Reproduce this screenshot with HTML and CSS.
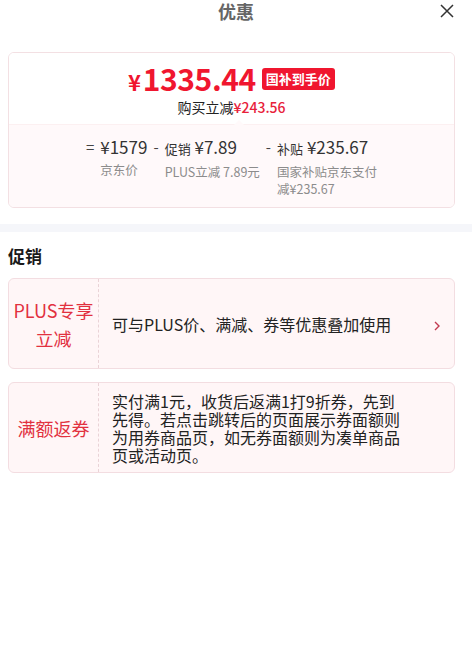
FILE: index.html
```html
<!DOCTYPE html>
<html lang="zh-CN">
<head>
    <meta charset="UTF-8">
    <meta name="viewport" content="width=device-width, initial-scale=1.0">
    <title>优惠</title>
    <link rel="stylesheet" href="styles.css">
</head>
<body>
    <div class="header">
        <span class="title">优惠</span>
        <span class="close">
            <svg width="14" height="14" viewBox="0 0 14 14"><path d="M1 1 L13 13 M13 1 L1 13" stroke="#333" stroke-width="1.5" fill="none"/></svg>
        </span>
    </div>

    <div class="summary">
        <div class="summary-top">
            <div class="price-row">
                <span class="price"><span class="yen">¥</span>1335.44</span>
                <span class="tag">国补到手价</span>
            </div>
            <div class="saving">购买立减<span class="red">¥243.56</span></div>
        </div>
        <div class="summary-bottom">
            <div class="calc">
                <div class="calc-col">
                    <span class="sign">=</span>
                    <div class="calc-body">
                        <div class="calc-num">¥1579</div>
                        <div class="calc-label">京东价</div>
                    </div>
                </div>
                <div class="calc-col">
                    <span class="sign">-</span>
                    <div class="calc-body">
                        <div class="calc-num"><span class="calc-name">促销</span> ¥7.89</div>
                        <div class="calc-label">PLUS立减 7.89元</div>
                    </div>
                </div>
                <div class="calc-col">
                    <span class="sign">-</span>
                    <div class="calc-body wide">
                        <div class="calc-num"><span class="calc-name">补贴</span> ¥235.67</div>
                        <div class="calc-label">国家补贴京东支付减¥235.67</div>
                    </div>
                </div>
            </div>
        </div>
    </div>

    <div class="divider"></div>

    <div class="section">
        <div class="section-title">促销</div>

        <div class="promo">
            <div class="promo-label">PLUS专享<br>立减</div>
            <div class="promo-desc">可与PLUS价、满减、券等优惠叠加使用</div>
            <div class="promo-side">
                <svg width="6" height="10" viewBox="0 0 6 10"><path d="M1 1 L5 5 L1 9" stroke="#c23a50" stroke-width="1.4" fill="none"/></svg>
            </div>
        </div>

        <div class="promo">
            <div class="promo-label">满额返券</div>
            <div class="promo-desc">实付满1元，收货后返满1打9折券，先到先得。若点击跳转后的页面展示券面额则为用券商品页，如无券面额则为凑单商品页或活动页。</div>
            <div class="promo-side"></div>
        </div>
    </div>
</body>
</html>
```

FILE: styles.css
```css
body {
    margin: 0;
    width: 472px;
    background-color: #fff;
    font-family: "Noto Sans CJK SC", "Liberation Sans", sans-serif;
    color: #333;
}
.header {
    position: relative;
    height: 22px;
    text-align: center;
}
.title {
    font-size: 18px;
    line-height: 22px;
    font-weight: bold;
    color: #666;
}
.close {
    position: absolute;
    right: 18px;
    top: 4px;
    width: 14px;
    height: 14px;
}
.close svg {
    display: block;
}
.summary {
    margin: 30px 0 0 8px;
    width: 445px;
    border: 1px solid #f3e0e3;
    border-radius: 6px;
    overflow: hidden;
}
.summary-top {
    padding: 7px 0 8px;
    text-align: center;
    background-color: #fff;
}
.price-row {
    display: flex;
    justify-content: center;
    align-items: center;
    gap: 6px;
    height: 38px;
}
.price {
    font-size: 30px;
    line-height: 32px;
    font-weight: bold;
    color: #f0162f;
    letter-spacing: -0.4px;
}
.yen {
    font-size: 22px;
    margin-right: 2px;
}
.tag {
    height: 22px;
    line-height: 22px;
    padding: 0 4px;
    background-color: #f0162f;
    color: #fff;
    font-size: 13px;
    font-weight: bold;
    border-radius: 3px;
}
.saving {
    font-size: 14px;
    line-height: 18px;
    color: #222;
}
.red {
    color: #e8213a;
    font-weight: 500;
}
.summary-bottom {
    position: relative;
    padding: 10px 0 10px;
    background-color: #fff9fa;
    border-top: 1px solid #fcf0f1;
}
.summary-bottom::after {
    content: "";
    position: absolute;
    left: 225px;
    top: -5px;
    border-left: 5px solid transparent;
    border-right: 5px solid transparent;
    border-bottom: 5px solid #fff9fa;
}
.calc {
    display: flex;
    justify-content: center;
    gap: 6px;
}
.calc-col {
    display: flex;
    align-items: flex-start;
    gap: 6px;
}
.sign {
    font-size: 15px;
    line-height: 24px;
    color: #444;
}
.calc-num {
    font-size: 17px;
    line-height: 24px;
    color: #333;
    white-space: nowrap;
    margin-bottom: 2px;
}
.calc-name {
    font-size: 13px;
}
.calc-label {
    font-size: 12.5px;
    line-height: 17px;
    color: #8c8c8c;
}
.wide {
    width: 100px;
}
.divider {
    margin-top: 16px;
    height: 8px;
    background-color: #f5f6fa;
}
.section {
    padding: 12px 17px 0 8px;
}
.section-title {
    font-size: 17px;
    line-height: 24px;
    font-weight: bold;
    color: #1a1a1a;
    margin-bottom: 10px;
}
.promo {
    display: flex;
    min-height: 89px;
    margin-bottom: 13px;
    background-color: #fff6f7;
    border: 1px solid #f3dde1;
    border-radius: 6px;
}
.promo-label {
    width: 89px;
    display: flex;
    align-items: center;
    justify-content: center;
    text-align: center;
    border-right: 1px dashed #ead3d7;
    font-size: 18px;
    line-height: 28px;
    color: #e2313f;
}
.promo-desc {
    flex: 1;
    display: flex;
    align-items: center;
    padding: 8px 0 8px 13px;
    font-size: 16px;
    line-height: 18px;
    color: #222;
}
.promo-side {
    width: 50px;
    display: flex;
    align-items: center;
    justify-content: flex-end;
    padding-right: 14px;
    box-sizing: border-box;
}
.promo-side svg {
    margin-top: 5px;
}
```
